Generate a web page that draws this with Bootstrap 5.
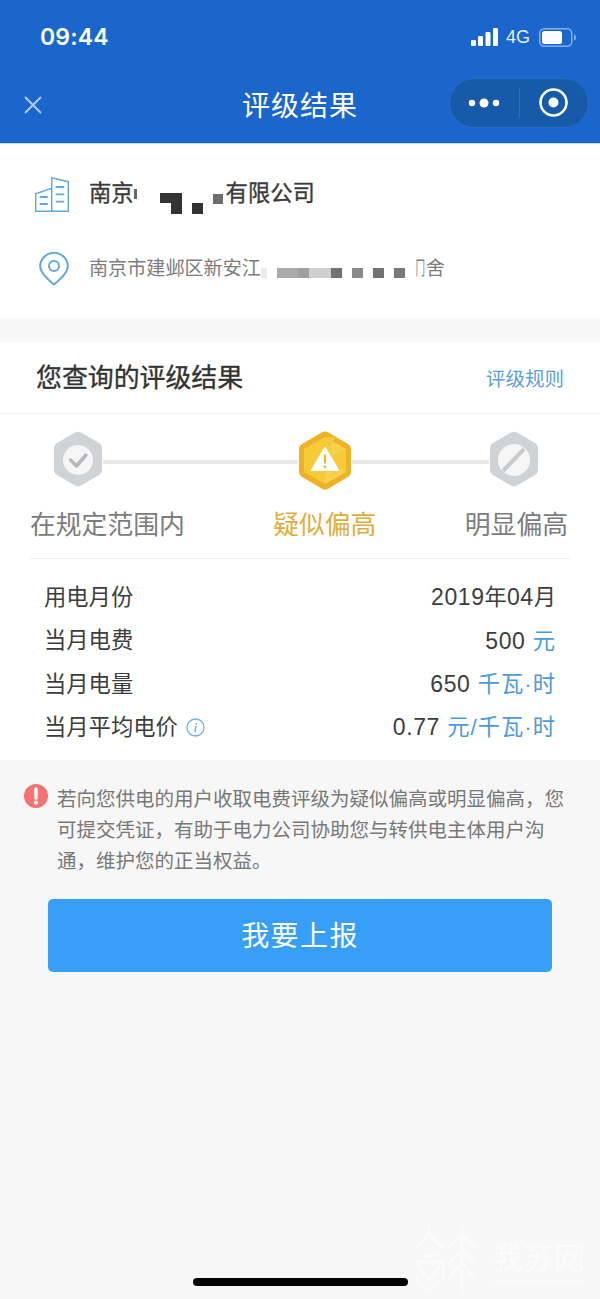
<!DOCTYPE html>
<html lang="zh-CN">

<head>
    <meta charset="UTF-8">
    <meta name="viewport" content="width=device-width, initial-scale=1.0">
    <title>评级结果</title>
    <link rel="stylesheet" href="https://cdn.jsdelivr.net/npm/bootstrap@5.3.0/dist/css/bootstrap.min.css">
    <style>
        html, body { height: 100%; }
        body {
            background: #f7f7f7;
            font-family: "Liberation Sans", "Noto Sans CJK SC", sans-serif;
            color: #333;
            overflow: hidden;
        }
        .phone { width: 600px; height: 1299px; position: relative; overflow: hidden; }

        /* header */
        .top-bar { height: 144px; background: #1a66cc; color: #fff; border-bottom: 1px solid #bfe0f7; }
        .status-row { height: 74px; padding: 0 23px 0 40px; }
        .clock { font-family: "Inter", "Liberation Sans", sans-serif; font-size: 23px; font-weight: 600; letter-spacing: .2px; }
        .net { font-size: 18px; margin: 0 9px 0 8px; opacity: .9; }
        .nav-row { height: 57px; padding: 0 11px 0 24px; }
        .close-ico { margin-top: 5px; }
        .nav-title { font-size: 28px; line-height: 1; letter-spacing: 1px; left: 0; right: 0; top: 93px; }
        .capsule {
            width: 140px; height: 50px; border-radius: 25px; background: #175aaa;
            border: 1px solid #2a6cc0;
        }
        .capsule > div { flex: 1; }
        .capsule-line { width: 1px; height: 30px; background: #2f6db9; flex: none !important; }

        /* company */
        .company-box { height: 174px; background: #fff; padding: 26px 36px 0; }
        .company-name { font-size: 22.3px; color: #3a3a3a; height: 48px; -webkit-text-stroke: .35px #3a3a3a; }
        .company-addr { font-size: 19.1px; color: #7d7d7d; height: 48px; margin-top: 27px; }
        .ico-col { width: 34px; margin-right: 19px; flex: none; }
        .ico-building { margin-left: -1px; display: block; }
        .ico-pin { margin-left: 3px; display: block; }
        .mask { display: inline-block; flex: none; }
        .addr-mask { height: 10px; margin-top: 8px; }
        .gap-r { margin-right: 10px; }
        .cut-char { width: 18px; margin: 0 -3px 0 6px; transform: scaleX(.5); text-align: center; }

        /* result */
        .result-box { margin-top: 24px; background: #fff; height: 418px; }
        .result-head { height: 72px; padding: 2px 36px 0; border-bottom: 1px solid #f4f4f4; }
        .result-title { font-size: 25.9px; color: #333; -webkit-text-stroke: .35px #333; }
        .rule-link { font-size: 19.5px; color: #5a9fdc; margin-top: 2px; }
        .steps { height: 145px; margin: 0 30px; border-bottom: 1px solid #efefef; padding-top: 17px; }
        .step-icons { padding: 0 31px 0 23px; height: 59px; }
        .step-line { height: 4px; margin-top: 29px; background: #e8e8e8; }
        .line-a { flex: 196 1 0; }
        .line-b { flex: 137 1 0; }
        .step-labels { margin-top: 17px; padding-right: 2px; }
        .step-label { font-size: 25.8px; line-height: 36px; color: #7c7c7c; white-space: nowrap; }
        .step-on { color: #e0ae3c; }
        .data-rows { padding: 17px 44px 0 44px; }
        .data-row { height: 43.3px; font-size: 22.3px; color: #3d3d3d; }
        .unit { color: #4d9bdc; margin-left: 1px; letter-spacing: 1px; }
        .num { font-family: "Liberation Sans", sans-serif; letter-spacing: .6px; font-size: 23px; }

        /* notice */
        .notice { padding: 24px 30px 0 24px; }
        .notice-text { font-size: 19.5px; line-height: 31px; color: #777; margin-left: 9px; }
        .report-btn {
            display: block; width: 504px; height: 73px; margin: 22px auto 0; padding-top: 9px;
            background: #389ff8; border: 0; border-radius: 5px; color: #fff;
            font-size: 28px; letter-spacing: 1.4px;
        }
        .report-btn:hover { background: #389ff8; color: #fff; }

        .home-bar { position: absolute; left: 193px; top: 1278px; width: 215px; height: 8px; background: #000; border-radius: 4px; }
        .mark-wrap { position: absolute; left: 412px; top: 1224px; opacity: .6; }
        .mark-name { position: absolute; left: 492px; top: 1243px; font-size: 31px; font-family: "Liberation Serif", "Noto Sans CJK SC", serif; color: #fff; line-height: 1; opacity: .6; }
        .mark-rule { position: absolute; left: 492px; top: 1279px; width: 94px; height: 4px; background: #fff; opacity: .3; }
    </style>
</head>

<body>
    <div class="phone">
        <!-- header -->
        <div class="top-bar position-relative">
            <div class="status-row d-flex align-items-center justify-content-between">
                <span class="clock">09:44</span>
                <div class="d-flex align-items-center">
                    <svg width="27" height="18" viewBox="0 0 27 18">
                        <rect x="0" y="12" width="5" height="6" rx="1.2" fill="#fff" />
                        <rect x="7" y="8" width="5" height="10" rx="1.2" fill="#fff" />
                        <rect x="14.500" y="4" width="5" height="14" rx="1.2" fill="#fff" />
                        <rect x="22" y="0" width="5" height="18" rx="1.2" fill="#fff" />
                    </svg>
                    <span class="net">4G</span>
                    <svg width="38" height="19" viewBox="0 0 38 19">
                        <rect x=".75" y=".75" width="32" height="17.500" rx="4.500" fill="none" stroke="#7fb0ea" stroke-width="1.500" />
                        <rect x="3" y="3" width="20" height="13" rx="2.500" fill="#fff" />
                        <path d="M35 6.500c1.500.5 2 1.500 2 3s-.5 2.500-2 3z" fill="#7fb0ea" />
                    </svg>
                </div>
            </div>
            <div class="nav-row d-flex align-items-center justify-content-between">
                <svg class="close-ico" width="18" height="18" viewBox="0 0 18 18">
                    <path d="M1 1l16 16M17 1L1 17" stroke="#b3cdee" stroke-width="1.800" fill="none" />
                </svg>
                <div class="capsule d-flex align-items-center">
                    <div class="d-flex justify-content-center">
                        <svg width="32" height="12" viewBox="0 0 32 12">
                            <circle cx="4" cy="6" r="3.200" fill="#fff" />
                            <circle cx="16" cy="6" r="4.500" fill="#fff" />
                            <circle cx="28" cy="6" r="3.200" fill="#fff" />
                        </svg>
                    </div>
                    <div class="capsule-line"></div>
                    <div class="d-flex justify-content-center">
                        <svg width="29" height="29" viewBox="0 0 29 29">
                            <circle cx="14.500" cy="14.500" r="13" fill="none" stroke="#fff" stroke-width="2.600" />
                            <circle cx="14.500" cy="14.500" r="5" fill="#fff" />
                        </svg>
                    </div>
                </div>
            </div>
            <div class="nav-title position-absolute text-center">评级结果</div>
        </div>

        <!-- company -->
        <div class="company-box">
            <div class="company-name d-flex align-items-center">
                <div class="ico-col">
                    <svg class="ico-building" width="34" height="35" viewBox="0 0 34 35" fill="none" stroke="#62a9e0" stroke-width="1.500">
                        <path d="M.7 34.200V16.700l16-5.400V34.200zM16.700 11.300V.8l16.600 3.900V34.200H.7" />
                        <path d="M4.700 20h8M4.700 27h8M20.700 10h8.600M20.700 17.300h8.600M20.700 24.700h8.600" stroke-width="1.800" />
                    </svg>
                </div>
                <span>南京</span>
                <span class="mask" style="width:3px;height:10px;background:#666"></span>
                <span class="mask" style="width:23px"></span>
                <svg class="mask" width="44" height="22" viewBox="0 0 44 22" style="margin-top:19px">
                    <path d="M0 0h22v21H11V10H0z" fill="#333" />
                    <path d="M32 10h11v11H32z" fill="#333" />
                </svg>
                <span class="mask" style="width:10px;height:10px;background:#6d6d6d;margin:10px 3px 0 9px"></span>
                <span>有限公司</span>
            </div>
            <div class="company-addr d-flex align-items-center">
                <div class="ico-col">
                    <svg class="ico-pin" width="30" height="34" viewBox="0 0 30 34" fill="none" stroke="#62a9e0" stroke-width="2">
                        <path d="M15 32.500C7 26 1.200 20 1.200 14.500a13.800 13.800 0 0 1 27.600 0C28.800 20 23 26 15 32.500z" />
                        <circle cx="15" cy="14" r="5" />
                    </svg>
                </div>
                <span>南京市建邺区新安江</span>
                <span class="mask addr-mask gap-r" style="width:6px;background:#ebebeb"></span>
                <span class="mask addr-mask" style="width:21px;background:#aaa"></span>
                <span class="mask addr-mask" style="width:11px;background:#9f9f9f"></span>
                <span class="mask addr-mask" style="width:22px;background:#cfcfcf"></span>
                <span class="mask addr-mask gap-r" style="width:11px;background:#727272"></span>
                <span class="mask addr-mask gap-r" style="width:11px;background:#8a8a8a"></span>
                <span class="mask addr-mask gap-r" style="width:11px;background:#727272"></span>
                <span class="mask addr-mask" style="width:11px;background:#797979"></span>
                <span class="mask cut-char">冂</span>
                <span>舍</span>
            </div>
        </div>

        <!-- result -->
        <div class="result-box">
            <div class="result-head d-flex align-items-center justify-content-between">
                <span class="result-title">您查询的评级结果</span>
                <span class="rule-link">评级规则</span>
            </div>
            <div class="steps">
                <div class="step-icons d-flex align-items-start">
                    <svg class="flex-shrink-0" width="50" height="56" viewBox="0 0 50 56">
                        <path d="M22 1.500a6 6 0 0 1 6 0l18 10.500a6 6 0 0 1 3 5.200v21.600a6 6 0 0 1-3 5.200L28 54.500a6 6 0 0 1-6 0L4 44a6 6 0 0 1-3-5.200V17.200a6 6 0 0 1 3-5.200z" fill="#d0d3d6" />
                        <circle cx="25" cy="29" r="15" fill="#f6f6f7" />
                        <path d="M17.500 29l6 6 9.500-11" fill="none" stroke="#b5b8bc" stroke-width="3.500" stroke-linecap="round" stroke-linejoin="round" />
                    </svg>
                    <div class="step-line line-a"></div>
                    <svg class="flex-shrink-0" width="54" height="59" viewBox="0 0 54 59">
                        <path d="M24 1.300a6 6 0 0 1 6 0L50 13a6 6 0 0 1 3 5.200v22.600a6 6 0 0 1-3 5.200L30 57.700a6 6 0 0 1-6 0L4 46a6 6 0 0 1-3-5.200V18.200A6 6 0 0 1 4 13z" fill="#efb226" />
                        <path d="M27 6l21 12v23L27 53 6 41V18z" fill="#f6cb37" />
                        <path d="M27 6l21 12-21 12 10-24zM27 30l21 11-21 12z" fill="#f9d75e" opacity=".5" />
                        <path d="M27 17l13 22H14z" fill="#fff" stroke="#fff" stroke-width="2" stroke-linejoin="round" />
                        <path d="M27 23.500v9M27 34.500v2.500" stroke="#eeb62a" stroke-width="2.200" />
                    </svg>
                    <div class="step-line line-b"></div>
                    <svg class="flex-shrink-0" width="50" height="56" viewBox="0 0 50 56">
                        <path d="M22 1.500a6 6 0 0 1 6 0l18 10.500a6 6 0 0 1 3 5.200v21.600a6 6 0 0 1-3 5.200L28 54.500a6 6 0 0 1-6 0L4 44a6 6 0 0 1-3-5.200V17.200a6 6 0 0 1 3-5.200z" fill="#d0d3d6" />
                        <circle cx="25" cy="29" r="16" fill="#f6f6f7" />
                        <path d="M35 18L14 40" stroke="#c8cbce" stroke-width="4" />
                    </svg>
                </div>
                <div class="step-labels d-flex justify-content-between">
                    <div class="step-label">在规定范围内</div>
                    <div class="step-label step-on">疑似偏高</div>
                    <div class="step-label">明显偏高</div>
                </div>
            </div>
            <div class="data-rows">
                <div class="data-row d-flex align-items-center justify-content-between">
                    <span>用电月份</span><span><span class="num">2019</span>年<span class="num">04</span>月</span>
                </div>
                <div class="data-row d-flex align-items-center justify-content-between">
                    <span>当月电费</span><span><span class="num">500</span> <span class="unit">元</span></span>
                </div>
                <div class="data-row d-flex align-items-center justify-content-between">
                    <span>当月电量</span><span><span class="num">650</span> <span class="unit">千瓦·时</span></span>
                </div>
                <div class="data-row d-flex align-items-center justify-content-between">
                    <span class="d-flex align-items-center gap-2">当月平均电价
                        <svg width="19" height="19" viewBox="0 0 19 19">
                            <circle cx="9.500" cy="9.500" r="8.500" fill="none" stroke="#6db1e4" stroke-width="1.300" />
                            <path d="M10 8l-1 6M10.300 5v1.500" stroke="#6db1e4" stroke-width="1.500" fill="none" />
                        </svg>
                    </span>
                    <span><span class="num">0.77</span> <span class="unit">元/千瓦·时</span></span>
                </div>
            </div>
        </div>

        <!-- notice -->
        <div class="notice d-flex align-items-start">
            <svg class="flex-shrink-0" width="24" height="24" viewBox="0 0 24 24">
                <circle cx="12" cy="12" r="12" fill="#f47373" />
                <path d="M12 5v9" stroke="#fff" stroke-width="3.400" stroke-linecap="round" />
                <circle cx="12" cy="18.500" r="2" fill="#fff" />
            </svg>
            <div class="notice-text">若向您供电的用户收取电费评级为疑似偏高或明显偏高，您可提交凭证，有助于电力公司协助您与转供电主体用户沟通，维护您的正当权益。</div>
        </div>
        <button type="button" class="btn report-btn">我要上报</button>

        <!-- watermark -->
        <svg class="mark-wrap" width="70" height="72" viewBox="0 0 70 72" fill="none" stroke="#fff" stroke-width="2.500">
            <path d="M17 2v10M3 24L17 11l14 13M8 32h18M3 38h28v16M6 42l11 14 11-14M3 54l14 14 14-14" />
            <path d="M50 2v68M36 24L50 11l14 13M38 38L50 26l12 12M36 56l14-18 14 18" />
        </svg>
        <div class="mark-name">我苏网</div>
        <div class="mark-rule"></div>
        <div class="home-bar"></div>
    </div>

    <script src="https://cdn.jsdelivr.net/npm/bootstrap@5.3.0/dist/js/bootstrap.bundle.min.js"></script>
</body>

</html>
